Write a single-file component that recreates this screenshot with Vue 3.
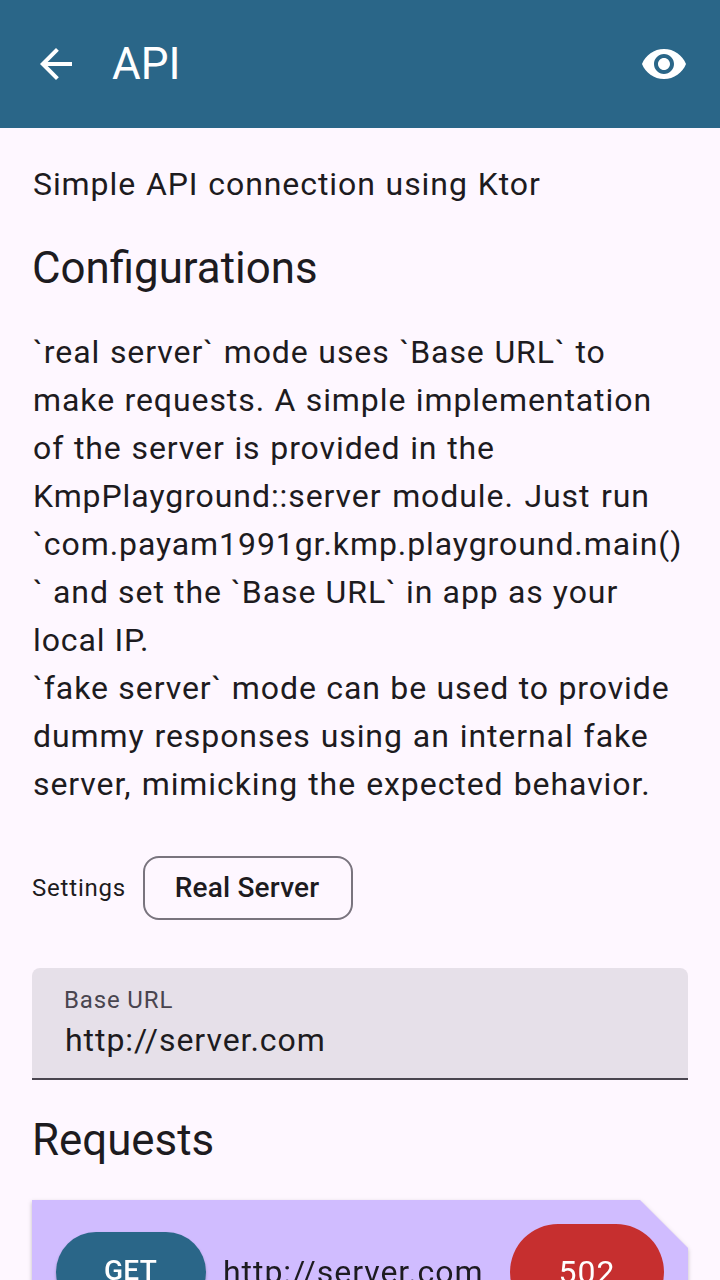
<script setup>
const intro = 'Simple API connection using Ktor'
const lines = [
  { text: '`real server` mode uses `Base URL` to', gap: 0.85 },
  { text: 'make requests. A simple implementation', gap: 0.6 },
  { text: 'of the server is provided in the', gap: 0.85 },
  { text: 'KmpPlayground::server module. Just run', gap: 1.8 },
  { text: '`com.payam1991gr.kmp.playground.main()', gap: 0 },
  { text: '` and set the `Base URL` in app as your', gap: 0.35 },
  { text: 'local IP.', gap: 0 },
  { text: '`fake server` mode can be used to provide', gap: 0.57 },
  { text: 'dummy responses using an internal fake', gap: 1.1 },
  { text: 'server, mimicking the expected behavior.', gap: 1.3 },
]
</script>

<template>
  <div class="screen">
    <header class="bar">
      <svg class="icon" viewBox="0 0 24 24"><path d="M20 11H7.83l5.59-5.59L12 4l-8 8 8 8 1.41-1.41L7.83 13H20v-2z" /></svg>
      <h1>API</h1>
      <svg class="icon" viewBox="0 0 24 24"><path d="M12 4.5C7 4.500 2.730 7.610 1 12c1.730 4.390 6 7.500 11 7.500s9.270-3.110 11-7.500c-1.730-4.390-6-7.500-11-7.500zM12 17c-2.760 0-5-2.240-5-5s2.240-5 5-5 5 2.240 5 5-2.240 5-5 5zm0-8c-1.660 0-3 1.340-3 3s1.340 3 3 3 3-1.340 3-3-1.340-3-3-3z" /></svg>
    </header>
    <main>
      <p class="body">{{ intro }}</p>
      <h2>Configurations</h2>
      <p class="body"><span v-for="line in lines" :key="line.text" class="line" :style="{ wordSpacing: line.gap + 'px' }">{{ line.text }}</span></p>
      <div class="settings">
        <span class="label">Settings</span>
        <button class="chip">Real Server</button>
      </div>
      <div class="field">
        <span class="caption">Base URL</span>
        <span class="value">http://server.com</span>
      </div>
      <h2>Requests</h2>
      <div class="shadow">
        <section class="card">
          <span class="method">GET</span>
          <span class="url">http://server.com</span>
          <span class="status">502</span>
        </section>
      </div>
    </main>
  </div>
</template>

<style>
body { background: #fef7ff; }
</style>
<style scoped>
.screen { box-sizing: border-box; width: 720px; height: 1280px; overflow: hidden; background: #fef7ff; color: #1d1b20; font-family: Roboto, sans-serif; }
.bar { box-sizing: border-box; height: 128px; padding: 0 32px; display: flex; align-items: center; background: #2a6688; color: #fff; }
.icon { width: 48px; height: 48px; fill: #fff; flex: none; }
h1 { flex: 1; margin: 0 0 0 32px; font-size: 44px; line-height: 56px; font-weight: 400; }
main { padding: 32px 32px 0; }
p { margin: 0; }
.body { font-size: 32px; line-height: 48px; letter-spacing: 0.92px; word-spacing: 1px; padding-left: 1px; white-space: nowrap; }
.line { display: block; }
h2 { margin: 32px 0; font-size: 43.85px; line-height: 56px; font-weight: 400; }
.settings { display: flex; align-items: center; margin-top: 48px; height: 64px; }
.label { width: 111px; font-size: 24px; letter-spacing: 0.8px; }
.chip { box-sizing: border-box; width: 210px; height: 64px; padding: 0 2px 2px 0; border: 2px solid #79747e; border-radius: 16px; background: none; color: #1d1b20; font: 500 28px Roboto, sans-serif; letter-spacing: 0.2px; }
.field { box-sizing: border-box; height: 112px; margin-top: 48px; padding: 16px 33px; display: flex; flex-direction: column; background: #e6e0e9; border-bottom: 2px solid #49454f; border-radius: 8px 8px 0 0; }
.caption { margin-left: -1px; font-size: 24px; line-height: 32px; letter-spacing: 0.85px; color: #49454f; }
.value { font-size: 32px; line-height: 48px; letter-spacing: 0.96px; }
.shadow { filter: drop-shadow(0 2px 2px rgba(0, 0, 0, .25)); }
.card { box-sizing: border-box; height: 160px; padding: 24px; display: flex; align-items: flex-start; background: #d0bcff; clip-path: polygon(0 0, 608px 0, 100% 48px, 100% 100%, 0 100%); }
.method { box-sizing: border-box; width: 150px; height: 80px; margin-top: 8px; padding-right: 1px; border-radius: 40px; background: #2a6688; color: #fff; font-size: 28px; font-weight: 500; line-height: 78px; text-align: center; letter-spacing: 0.2px; box-shadow: 0 2px 3px rgba(0, 0, 0, .25); }
.url { flex: 1; margin-left: 17px; font-size: 32px; line-height: 96px; letter-spacing: 0.94px; }
.status { width: 154px; height: 96px; border-radius: 48px; background: #c62f2f; color: #fff; font-size: 32px; line-height: 96px; text-align: center; letter-spacing: 1px; }
</style>
